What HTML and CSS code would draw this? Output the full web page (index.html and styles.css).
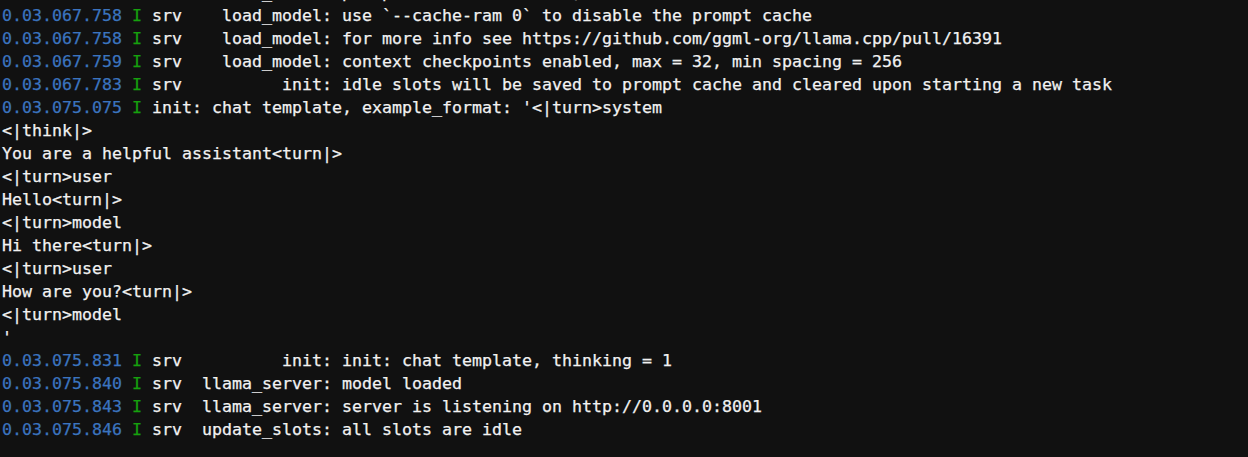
FILE: index.html
```html
<!DOCTYPE html>
<html lang="en">
<head>
<meta charset="utf-8">
<title>llama-server log</title>
<link rel="stylesheet" href="styles.css">
</head>
<body>
<main class="term">
<div class="line clipped"><span class="ts">0.03.067.758</span> <span class="lv">I</span> srv    load_model: prompt cache is enabled, size limit: 8192 MiB</div>
<div class="line"><span class="ts">0.03.067.758</span> <span class="lv">I</span> srv    load_model: use `--cache-ram 0` to disable the prompt cache</div>
<div class="line"><span class="ts">0.03.067.758</span> <span class="lv">I</span> srv    load_model: for more info see https://github.com/ggml-org/llama.cpp/pull/16391</div>
<div class="line"><span class="ts">0.03.067.759</span> <span class="lv">I</span> srv    load_model: context checkpoints enabled, max = 32, min spacing = 256</div>
<div class="line"><span class="ts">0.03.067.783</span> <span class="lv">I</span> srv          init: idle slots will be saved to prompt cache and cleared upon starting a new task</div>
<div class="line"><span class="ts">0.03.075.075</span> <span class="lv">I</span> init: chat template, example_format: '&lt;|turn&gt;system</div>
<div class="line">&lt;|think|&gt;</div>
<div class="line">You are a helpful assistant&lt;turn|&gt;</div>
<div class="line">&lt;|turn&gt;user</div>
<div class="line">Hello&lt;turn|&gt;</div>
<div class="line">&lt;|turn&gt;model</div>
<div class="line">Hi there&lt;turn|&gt;</div>
<div class="line">&lt;|turn&gt;user</div>
<div class="line">How are you?&lt;turn|&gt;</div>
<div class="line">&lt;|turn&gt;model</div>
<div class="line">'</div>
<div class="line"><span class="ts">0.03.075.831</span> <span class="lv">I</span> srv          init: init: chat template, thinking = 1</div>
<div class="line"><span class="ts">0.03.075.840</span> <span class="lv">I</span> srv  llama_server: model loaded</div>
<div class="line"><span class="ts">0.03.075.843</span> <span class="lv">I</span> srv  llama_server: server is listening on http://0.0.0.0:8001</div>
<div class="line"><span class="ts">0.03.075.846</span> <span class="lv">I</span> srv  update_slots: all slots are idle</div>
</main>
</body>
</html>
```

FILE: styles.css
```css
html, body {
  margin: 0;
  padding: 0;
  background: #111111;
  height: 100%;
  overflow: hidden;
}

.term {
  padding: 0 0 0 2px;
  font-family: "DejaVu Sans Mono", "Liberation Mono", monospace;
  font-size: 16.61px;
  line-height: 23px;
  color: #f2f2f2;
  -webkit-text-stroke: 0.25px currentColor;
}

.line {
  white-space: pre;
  height: 23px;
}

.clipped {
  margin-top: -19px;
}

.ts {
  color: #3b74bf;
}

.lv {
  color: #16a10e;
}
```
